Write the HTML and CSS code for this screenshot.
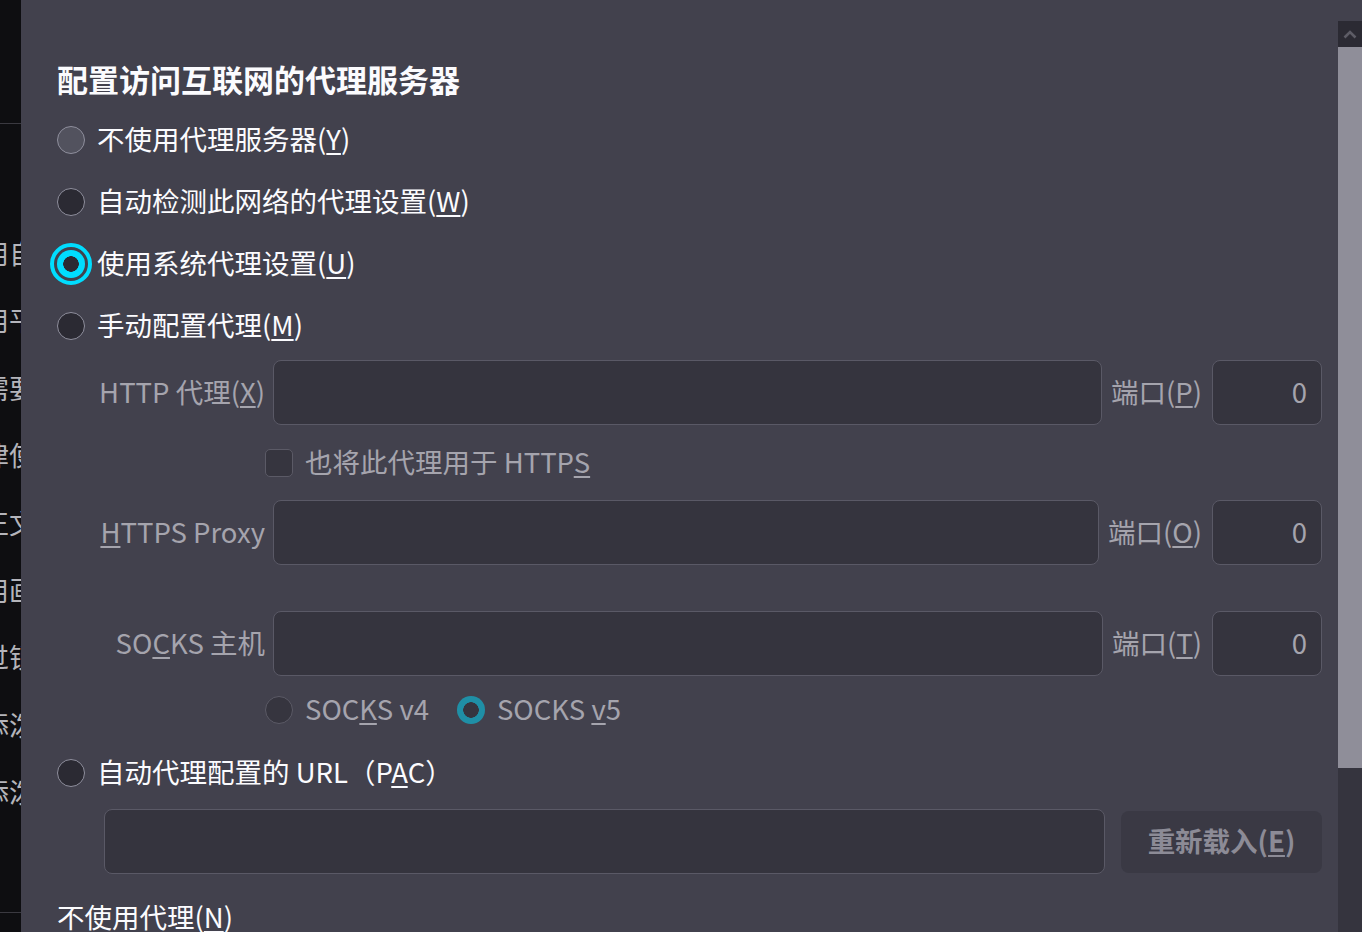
FILE: index.html
```html
<!DOCTYPE html>
<html lang="zh-CN">
<head>
<meta charset="utf-8">
<title>连接设置</title>
<link rel="stylesheet" href="styles.css">
</head>
<body>
<aside class="sidebar">
  <div class="sb-top"></div>
  <div class="sb-items">
    <div class="sb-item">用自</div>
    <div class="sb-item">用平</div>
    <div class="sb-item">需要</div>
    <div class="sb-item">律使</div>
    <div class="sb-item">正文</div>
    <div class="sb-item">用画</div>
    <div class="sb-item">过锁</div>
    <div class="sb-item">添泼</div>
    <div class="sb-item">添泼</div>
  </div>
  <div class="sb-bottom"></div>
</aside>
<div class="dialog">
  <main class="content">
    <h1 class="title">配置访问互联网的代理服务器</h1>
    <div class="opt"><span class="radio hover"></span><span class="txt">不使用代理服务器(<u>Y</u>)</span></div>
    <div class="opt"><span class="radio"></span><span class="txt">自动检测此网络的代理设置(<u>W</u>)</span></div>
    <div class="opt"><span class="radio checked"></span><span class="txt">使用系统代理设置(<u>U</u>)</span></div>
    <div class="opt"><span class="radio"></span><span class="txt">手动配置代理(<u>M</u>)</span></div>

    <div class="field-row first">
      <span class="flabel">HTTP 代理(<u>X</u>)</span>
      <div class="input"></div>
      <span class="plabel">端口(<u>P</u>)</span>
      <div class="port">0</div>
    </div>
    <div class="check-row">
      <span class="checkbox"></span>
      <span class="dim">也将此代理用于 HTTP<u>S</u></span>
    </div>
    <div class="field-row">
      <span class="flabel"><u>H</u>TTPS Proxy</span>
      <div class="input"></div>
      <span class="plabel">端口(<u>O</u>)</span>
      <div class="port">0</div>
    </div>
    <div class="field-row socks">
      <span class="flabel">SO<u>C</u>KS 主机</span>
      <div class="input"></div>
      <span class="plabel">端口(<u>T</u>)</span>
      <div class="port">0</div>
    </div>
    <div class="ver-row">
      <span class="radio off"></span><span class="dim">SOC<u>K</u>S v4</span>
      <span class="radio off-checked v5"></span><span class="dim">SOCKS <u>v</u>5</span>
    </div>
    <div class="opt pac"><span class="radio"></span><span class="txt">自动代理配置的 URL（P<u>A</u>C）</span></div>
    <div class="pac-row">
      <div class="input pac-input"></div>
      <div class="btn">重新载入(<u>E</u>)</div>
    </div>
    <div class="noproxy">不使用代理(<u>N</u>)</div>
  </main>
  <div class="scrollbar">
    <div class="sc-btn">
      <svg width="14" height="9" viewBox="0 0 14 9"><polyline points="1.5,7.5 7,2 12.5,7.5" fill="none" stroke="#5d5c66" stroke-width="2.6"/></svg>
    </div>
    <div class="sc-thumb"></div>
    <div class="sc-track"></div>
  </div>
</div>
</body>
</html>
```

FILE: styles.css
```css
* { box-sizing: border-box; }
html, body { margin: 0; }
body {
  display: flex;
  height: 932px;
  overflow: hidden;
  background: #42414d;
  font-family: "Noto Sans CJK SC", "Noto Sans", sans-serif;
  color: #fbfbfe;
}
u { text-decoration-thickness: 2px; text-underline-offset: 3px; }

.sidebar {
  width: 21px;
  flex: none;
  background: #0e0e11;
  display: flex;
  flex-direction: column;
  overflow: hidden;
}
.sb-top { height: 124px; flex: none; border-bottom: 1px solid #3a3940; }
.sb-items { padding-top: 95px; }
.sb-item {
  height: 67.4px;
  line-height: 68px;
  font-size: 27px;
  white-space: nowrap;
  margin-left: -18px;
  color: #b4b4ba;
}
.sb-bottom { margin-top: auto; height: 20px; flex: none; border-top: 1px solid #3a3940; }

.dialog { flex: 1; display: flex; background: #42414d; }
.content {
  flex: 1;
  padding: 57px 16px 0 36px;
  font-size: 27.5px;
  white-space: nowrap;
}
.title {
  margin: 0 0 8px;
  font-size: 31px;
  line-height: 44px;
  font-weight: 700;
}

.opt {
  display: flex;
  align-items: center;
  gap: 12px;
  height: 62px;
}
.txt, .dim, .flabel, .plabel { padding-bottom: 4px; }
.radio {
  width: 28px;
  height: 28px;
  flex: none;
  border-radius: 50%;
  border: 1px solid #8f8f9d;
  background: #2b2a33;
}
.radio.hover { background: #52525e; }
.radio.checked {
  border: none;
  background: radial-gradient(circle, #2b2a33 0 7.5px, #00ddff 8px);
  outline: 4px solid #00ddff;
  outline-offset: 3px;
}
.radio.off { background: #36353f; border-color: #5b5a66; }
.radio.off-checked {
  border: none;
  background: radial-gradient(circle, #36353f 0 7.5px, #1f8fa6 8px);
}

.dim { color: #a5a4ad; }

.field-row {
  display: flex;
  align-items: center;
  height: 65px;
}
.field-row.first { margin-top: 3px; }
.field-row.socks { margin-top: 46px; }
.flabel {
  width: 208px;
  flex: none;
  text-align: right;
  color: #a5a4ad;
}
.input {
  flex: 1;
  height: 65px;
  margin-left: 8px;
  border: 1px solid #5a5966;
  border-radius: 8px;
  background: #35343e;
}
.plabel { margin-left: 9px; color: #a5a4ad; }
.port {
  width: 110px;
  flex: none;
  height: 65px;
  margin-left: 10px;
  border: 1px solid #5a5966;
  border-radius: 8px;
  background: #35343e;
  text-align: right;
  padding-right: 14px;
  line-height: 60px;
  color: #a5a4ad;
}

.check-row {
  display: flex;
  align-items: center;
  gap: 12px;
  height: 75px;
  padding-left: 208px;
}
.checkbox {
  width: 28px;
  height: 28px;
  flex: none;
  border: 1px solid #5b5a66;
  border-radius: 5px;
  background: #36353f;
}

.ver-row {
  display: flex;
  align-items: center;
  gap: 12px;
  height: 68px;
  padding-left: 208px;
}
.ver-row .v5 { margin-left: 16px; }

.opt.pac { height: 58px; }
.pac-row {
  display: flex;
  align-items: center;
  height: 65px;
  margin-top: 7px;
  padding-left: 47px;
}
.pac-input { margin-left: 0; }
.btn {
  width: 201px;
  height: 62px;
  flex: none;
  margin-left: 16px;
  border-radius: 8px;
  background: #3a3944;
  color: #8c8b96;
  font-weight: 700;
  text-align: center;
  line-height: 58px;
}
.noproxy {
  margin-top: 13px;
  height: 62px;
  line-height: 58px;
}

.scrollbar {
  width: 24px;
  flex: none;
  margin-top: 21px;
  display: flex;
  flex-direction: column;
}
.sc-btn {
  height: 26px;
  flex: none;
  background: #2b2a33;
  display: flex;
  align-items: center;
  justify-content: center;
}
.sc-thumb { height: 721px; flex: none; background: #8f8e99; }
.sc-track { flex: 1; background: #35343e; }
```
